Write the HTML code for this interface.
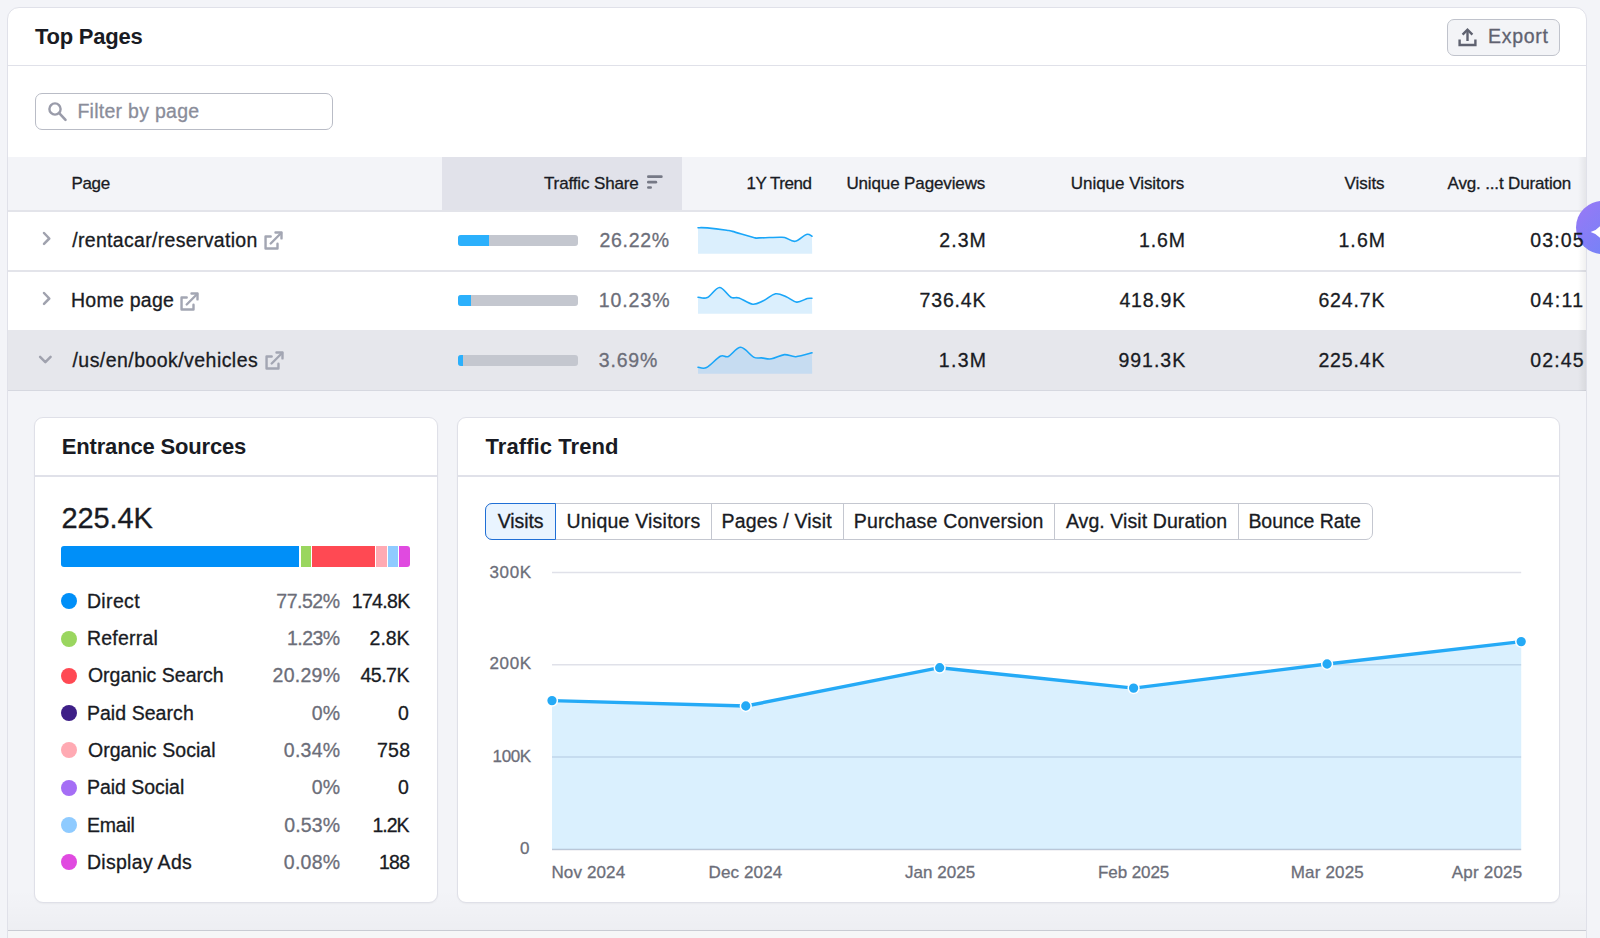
<!DOCTYPE html><html><head><meta charset="utf-8"><style>
*{box-sizing:border-box}
html,body{margin:0;padding:0}
body{width:1600px;height:938px;overflow:hidden;position:relative;background:#f3f4f8;font-family:"Liberation Sans",sans-serif;color:#191b23}
.a{position:absolute}
.tx{position:absolute;white-space:nowrap;font-family:"Liberation Sans",sans-serif}
</style></head><body>
<div class="a" style="left:7px;top:7px;width:1580px;height:1100px;background:#fff;border:1px solid #e0e1e9;border-radius:12px"></div>
<div class="a" style="left:8px;top:65px;width:1578px;height:1px;background:#e0e1e9"></div>
<div class="a" style="left:1447px;top:19px;width:113px;height:37px;background:#f3f4f7;border:1.3px solid #c0c3cc;border-radius:7px"></div>
<svg class="a" style="left:1457px;top:27px" width="21" height="21" viewBox="0 0 21 21"><path d="M10.5 3 L10.5 14" stroke="#5f6270" stroke-width="2.4" fill="none"/><path d="M5.6 7.6 L10.5 2.6 L15.4 7.6" stroke="#5f6270" stroke-width="2.4" fill="none" stroke-linejoin="miter"/><path d="M2.6 12.5 L2.6 18 L18.4 18 L18.4 12.5" stroke="#5f6270" stroke-width="2.4" fill="none"/></svg>
<div class="a" style="left:35px;top:93px;width:298px;height:37px;background:#fff;border:1px solid #b9bcc6;border-radius:7px"></div>
<svg class="a" style="left:46.5px;top:101px" width="21" height="21" viewBox="0 0 21 21"><circle cx="8" cy="8" r="5.6" stroke="#9a9caa" stroke-width="2.4" fill="none"/><path d="M12.2 12.2 L18.5 18.8" stroke="#9a9caa" stroke-width="2.6" stroke-linecap="round"/></svg>
<div class="a" style="left:8px;top:157px;width:1578px;height:53px;background:#f3f4f8"></div>
<div class="a" style="left:442px;top:157px;width:240px;height:53px;background:#e1e2ea"></div>
<div class="a" style="left:8px;top:210px;width:1578px;height:1.5px;background:#e3e4ea"></div>
<svg class="a" style="left:646px;top:175px" width="18" height="15" viewBox="0 0 18 15"><g stroke="#767986" stroke-width="2.6" stroke-linecap="round"><path d="M2.3 1.67 H15.4"/><path d="M2.3 7.13 H9.9"/><path d="M2.3 12.47 H4.7"/></g></svg>
<div class="a" style="left:8px;top:270px;width:1578px;height:1.5px;background:#e3e4ea"></div>
<div class="a" style="left:8px;top:330px;width:1578px;height:61px;background:#e6e7ec"></div>
<div class="a" style="left:8px;top:390px;width:1578px;height:1.5px;background:#d6d8e0"></div>
<svg class="a" style="left:41px;top:230.5px" width="11" height="15" viewBox="0 0 11 15"><path d="M3 2 L8.3 7.5 L3 12.9" stroke="#a0a2ae" stroke-width="2.5" fill="none" stroke-linecap="round" stroke-linejoin="round"/></svg>
<svg class="a" style="left:41px;top:290.5px" width="11" height="15" viewBox="0 0 11 15"><path d="M3 2 L8.3 7.5 L3 12.9" stroke="#a0a2ae" stroke-width="2.5" fill="none" stroke-linecap="round" stroke-linejoin="round"/></svg>
<svg class="a" style="left:37px;top:354px" width="16" height="11" viewBox="0 0 16 11"><path d="M3.1 2.9 L8.35 8.2 L13.6 2.9" stroke="#a0a2ae" stroke-width="2.5" fill="none" stroke-linecap="round" stroke-linejoin="round"/></svg>
<svg class="a" style="left:262px;top:230px" width="22" height="22" viewBox="0 0 22 22"><g stroke="#a3a6b3" stroke-width="2.4" fill="none" stroke-linecap="round" stroke-linejoin="round"><path d="M8.7 6.5 H3.55 V18.5 H15.5 V13.7"/><path d="M8.7 13.5 L19.2 3"/><path d="M13.5 2.5 H19.5 V8.4"/></g></svg>
<svg class="a" style="left:177.9px;top:290.5px" width="22" height="22" viewBox="0 0 22 22"><g stroke="#a3a6b3" stroke-width="2.4" fill="none" stroke-linecap="round" stroke-linejoin="round"><path d="M8.7 6.5 H3.55 V18.5 H15.5 V13.7"/><path d="M8.7 13.5 L19.2 3"/><path d="M13.5 2.5 H19.5 V8.4"/></g></svg>
<svg class="a" style="left:262.6px;top:350.2px" width="22" height="22" viewBox="0 0 22 22"><g stroke="#a3a6b3" stroke-width="2.4" fill="none" stroke-linecap="round" stroke-linejoin="round"><path d="M8.7 6.5 H3.55 V18.5 H15.5 V13.7"/><path d="M8.7 13.5 L19.2 3"/><path d="M13.5 2.5 H19.5 V8.4"/></g></svg>
<div class="a" style="left:458px;top:235.3px;width:120px;height:10.5px;background:#c4c7cf;border-radius:3px;overflow:hidden"><div style="width:31.3px;height:100%;background:#2bb0fc"></div></div>
<div class="a" style="left:458px;top:295.3px;width:120px;height:10.5px;background:#c4c7cf;border-radius:3px;overflow:hidden"><div style="width:12.5px;height:100%;background:#2bb0fc"></div></div>
<div class="a" style="left:458px;top:355.3px;width:120px;height:10.5px;background:#c4c7cf;border-radius:3px;overflow:hidden"><div style="width:4.6px;height:100%;background:#2bb0fc"></div></div>
<svg style="position:absolute;left:697.7px;top:226px;overflow:visible" width="114.2" height="27.69999999999999" viewBox="0 0 114.2 27.69999999999999"><path d="M0.0,1.7 C1.6,1.7 4.5,1.5 9.3,1.9 C14.1,2.3 24.6,3.6 28.8,4.2 C33.0,4.8 30.0,4.2 34.5,5.4 C39.0,6.6 51.1,10.4 55.6,11.5 C60.1,12.6 56.9,12.0 61.2,11.9 C65.5,11.9 77.2,11.2 81.6,11.2 C85.9,11.2 84.7,11.0 87.3,11.7 C89.9,12.4 93.6,15.8 97.1,15.3 C100.6,14.8 105.6,9.4 108.4,8.5 C111.2,7.6 113.1,9.9 114.0,10.2 L114.2,27.69999999999999 L0,27.69999999999999 Z" fill="#dbeffd"/><path d="M0.0,1.7 C1.6,1.7 4.5,1.5 9.3,1.9 C14.1,2.3 24.6,3.6 28.8,4.2 C33.0,4.8 30.0,4.2 34.5,5.4 C39.0,6.6 51.1,10.4 55.6,11.5 C60.1,12.6 56.9,12.0 61.2,11.9 C65.5,11.9 77.2,11.2 81.6,11.2 C85.9,11.2 84.7,11.0 87.3,11.7 C89.9,12.4 93.6,15.8 97.1,15.3 C100.6,14.8 105.6,9.4 108.4,8.5 C111.2,7.6 113.1,9.9 114.0,10.2" fill="none" stroke="#1aa6f8" stroke-width="1.6" stroke-linecap="round"/></svg>
<svg style="position:absolute;left:697.7px;top:286px;overflow:visible" width="114.2" height="27.69999999999999" viewBox="0 0 114.2 27.69999999999999"><path d="M0.0,11.2 C1.6,11.2 5.7,13.1 9.3,11.5 C12.9,9.9 17.6,1.6 21.5,1.5 C25.4,1.4 29.6,9.4 32.9,11.2 C36.1,12.9 37.4,10.8 41.0,12.0 C44.6,13.2 50.7,17.7 54.8,18.2 C58.9,18.6 61.6,16.4 65.4,14.7 C69.2,13.0 73.8,8.5 77.6,7.8 C81.4,7.1 84.7,9.3 88.2,10.7 C91.7,12.1 95.2,15.8 98.7,16.1 C102.2,16.4 106.8,13.1 109.3,12.5 C111.8,11.9 113.2,12.3 114.0,12.3 L114.2,27.69999999999999 L0,27.69999999999999 Z" fill="#dbeffd"/><path d="M0.0,11.2 C1.6,11.2 5.7,13.1 9.3,11.5 C12.9,9.9 17.6,1.6 21.5,1.5 C25.4,1.4 29.6,9.4 32.9,11.2 C36.1,12.9 37.4,10.8 41.0,12.0 C44.6,13.2 50.7,17.7 54.8,18.2 C58.9,18.6 61.6,16.4 65.4,14.7 C69.2,13.0 73.8,8.5 77.6,7.8 C81.4,7.1 84.7,9.3 88.2,10.7 C91.7,12.1 95.2,15.8 98.7,16.1 C102.2,16.4 106.8,13.1 109.3,12.5 C111.8,11.9 113.2,12.3 114.0,12.3" fill="none" stroke="#1aa6f8" stroke-width="1.6" stroke-linecap="round"/></svg>
<svg style="position:absolute;left:697.7px;top:346px;overflow:visible" width="114.2" height="27.69999999999999" viewBox="0 0 114.2 27.69999999999999"><path d="M0.0,21.2 C1.4,21.3 4.8,23.4 8.5,21.6 C12.2,19.8 18.7,12.1 22.3,10.2 C25.9,8.3 27.0,11.9 30.4,10.4 C33.8,8.9 38.5,1.2 42.7,1.3 C46.9,1.4 52.1,9.3 55.6,11.1 C59.1,12.9 60.8,11.6 63.8,11.9 C66.8,12.2 69.7,13.4 73.5,12.8 C77.3,12.3 82.4,9.0 86.5,8.6 C90.6,8.3 93.3,11.0 97.9,10.7 C102.5,10.4 111.3,7.5 114.0,6.8 L114.2,27.69999999999999 L0,27.69999999999999 Z" fill="#c6dcf1"/><path d="M0.0,21.2 C1.4,21.3 4.8,23.4 8.5,21.6 C12.2,19.8 18.7,12.1 22.3,10.2 C25.9,8.3 27.0,11.9 30.4,10.4 C33.8,8.9 38.5,1.2 42.7,1.3 C46.9,1.4 52.1,9.3 55.6,11.1 C59.1,12.9 60.8,11.6 63.8,11.9 C66.8,12.2 69.7,13.4 73.5,12.8 C77.3,12.3 82.4,9.0 86.5,8.6 C90.6,8.3 93.3,11.0 97.9,10.7 C102.5,10.4 111.3,7.5 114.0,6.8" fill="none" stroke="#1aa6f8" stroke-width="1.6" stroke-linecap="round"/></svg>
<div class="a" style="left:1578px;top:157px;width:8px;height:234px;background:linear-gradient(to right, rgba(0,0,0,0), rgba(0,0,0,0.06))"></div>
<div class="a" style="left:8px;top:391px;width:1578px;height:539px;background:#f3f4f8"></div>
<div class="a" style="left:8px;top:890px;width:1578px;height:40px;background:linear-gradient(to bottom, rgba(0,0,0,0), rgba(0,0,0,0.025))"></div>
<div class="a" style="left:8px;top:929.5px;width:1578px;height:1.5px;background:#c9cbd3"></div>
<div class="a" style="left:8px;top:931px;width:1578px;height:10px;background:#f6f6f7"></div>
<div class="a" style="left:34px;top:416.5px;width:404px;height:486px;background:#fff;border:1px solid #dfe0e8;border-radius:9px;box-shadow:0 1px 2px rgba(0,0,0,0.04)"></div>
<div class="a" style="left:35px;top:475px;width:402px;height:1.5px;background:#e0e1e9"></div>
<div class="a" style="left:61.1px;top:545.5px;width:238.2px;height:21.2px;background:#008ff8;border-radius:3px 0 0 3px"></div>
<div class="a" style="left:301px;top:545.5px;width:9.9px;height:21.2px;background:#9ad65f;border-radius:0"></div>
<div class="a" style="left:312.1px;top:545.5px;width:62.6px;height:21.2px;background:#ff4953;border-radius:0"></div>
<div class="a" style="left:376.1px;top:545.5px;width:10.6px;height:21.2px;background:#ffaab3;border-radius:0"></div>
<div class="a" style="left:388px;top:545.5px;width:10.0px;height:21.2px;background:#8fcbff;border-radius:0"></div>
<div class="a" style="left:399.3px;top:545.5px;width:10.5px;height:21.2px;background:#e04ae0;border-radius:0 3px 3px 0"></div>
<div class="a" style="left:61.1px;top:593.2px;width:16px;height:16px;border-radius:50%;background:#008ff8"></div>
<div class="a" style="left:61.1px;top:630.5px;width:16px;height:16px;border-radius:50%;background:#9ad65f"></div>
<div class="a" style="left:61.1px;top:667.8px;width:16px;height:16px;border-radius:50%;background:#ff4953"></div>
<div class="a" style="left:61.1px;top:705.1px;width:16px;height:16px;border-radius:50%;background:#3e1f87"></div>
<div class="a" style="left:61.1px;top:742.4px;width:16px;height:16px;border-radius:50%;background:#ffaab3"></div>
<div class="a" style="left:61.1px;top:779.7px;width:16px;height:16px;border-radius:50%;background:#a56ef5"></div>
<div class="a" style="left:61.1px;top:817.0px;width:16px;height:16px;border-radius:50%;background:#8fcbff"></div>
<div class="a" style="left:61.1px;top:854.3px;width:16px;height:16px;border-radius:50%;background:#e04ae0"></div>
<div class="a" style="left:456.8px;top:416.5px;width:1103.7px;height:486px;background:#fff;border:1px solid #dfe0e8;border-radius:9px;box-shadow:0 1px 2px rgba(0,0,0,0.04)"></div>
<div class="a" style="left:457.8px;top:475px;width:1101.7px;height:1.5px;background:#e0e1e9"></div>
<div class="a" style="left:485px;top:503px;width:888px;height:37px;border:1.5px solid #c4c7d0;border-radius:7px;background:#fff"></div>
<div class="a" style="left:710.5px;top:503px;width:1.5px;height:37px;background:#c4c7d0"></div>
<div class="a" style="left:842.85px;top:503px;width:1.5px;height:37px;background:#c4c7d0"></div>
<div class="a" style="left:1053.75px;top:503px;width:1.5px;height:37px;background:#c4c7d0"></div>
<div class="a" style="left:1237.75px;top:503px;width:1.5px;height:37px;background:#c4c7d0"></div>
<div class="a" style="left:484.7px;top:503px;width:71px;height:37px;border:1.8px solid #1f6fd6;border-radius:7px 0 0 7px;background:#e9f4ff"></div>
<svg class="a" style="left:552px;top:560px;overflow:visible" width="969.2" height="291" viewBox="0 0 969.2 291"><line x1="0" y1="12.6" x2="969.2" y2="12.6" stroke="#e0e1e9" stroke-width="1.5"/><line x1="0" y1="104.8" x2="969.2" y2="104.8" stroke="#e0e1e9" stroke-width="1.5"/><line x1="0" y1="197.0" x2="969.2" y2="197.0" stroke="#e0e1e9" stroke-width="1.5"/><line x1="0" y1="289.4" x2="969.2" y2="289.4" stroke="#c9cbd6" stroke-width="1.5"/>
<path d="M0,289.4 L0.0,140.6 L193.8,146.0 L387.7,107.7 L581.6,128.1 L775.1,104.0 L969.2,81.6 L969.2,289.4 Z" fill="rgba(30,162,250,0.165)"/>
<polyline points="0.0,140.6 193.8,146.0 387.7,107.7 581.6,128.1 775.1,104.0 969.2,81.6" fill="none" stroke="#25aaf6" stroke-width="3.4" stroke-linejoin="round" stroke-linecap="round"/>
<circle cx="0.0" cy="140.6" r="5.4" fill="#25aaf6" stroke="#fff" stroke-width="1.5"/><circle cx="193.8" cy="146.0" r="5.4" fill="#25aaf6" stroke="#fff" stroke-width="1.5"/><circle cx="387.7" cy="107.7" r="5.4" fill="#25aaf6" stroke="#fff" stroke-width="1.5"/><circle cx="581.6" cy="128.1" r="5.4" fill="#25aaf6" stroke="#fff" stroke-width="1.5"/><circle cx="775.1" cy="104.0" r="5.4" fill="#25aaf6" stroke="#fff" stroke-width="1.5"/><circle cx="969.2" cy="81.6" r="5.4" fill="#25aaf6" stroke="#fff" stroke-width="1.5"/></svg>
<div class="a" style="left:1576px;top:201px;width:53px;height:53px;border-radius:50%;background:linear-gradient(135deg,#9a78f6,#6a86f7)"></div>
<svg class="a" style="left:1585px;top:218px" width="15" height="28" viewBox="0 0 15 28"><path d="M19,0.5999999999999996 Q21.95,11.05 32.4,14 Q21.95,16.95 19,27.4 Q16.05,16.95 5.6,14 Q16.05,11.05 19,0.5999999999999996 Z" fill="#fff"/></svg>
<div class="tx" style="left:35px;top:25.9px;font-size:22px;line-height:22px;font-weight:700;color:#191b23;letter-spacing:-0.25px">Top Pages</div>
<div class="tx" style="left:1488px;top:27.03px;font-size:19.5px;line-height:19.5px;font-weight:400;color:#5f6270;letter-spacing:0.7px;-webkit-text-stroke:0.3px #5f6270">Export</div>
<div class="tx" style="left:77.4px;top:102.02px;font-size:19.5px;line-height:19.5px;font-weight:400;color:#8a8d9a;letter-spacing:0.277px;-webkit-text-stroke:0.3px #8a8d9a">Filter by page</div>
<div class="tx" style="left:71.5px;top:174.9px;font-size:17px;line-height:17px;font-weight:400;color:#191b23;letter-spacing:-0.367px;-webkit-text-stroke:0.3px #191b23">Page</div>
<div class="tx" style="left:544px;top:174.9px;font-size:17px;line-height:17px;font-weight:400;color:#191b23;letter-spacing:-0.133px;-webkit-text-stroke:0.3px #191b23">Traffic Share</div>
<div class="tx" style="left:746.5px;top:174.9px;font-size:17px;line-height:17px;font-weight:400;color:#191b23;letter-spacing:-0.457px;-webkit-text-stroke:0.3px #191b23">1Y Trend</div>
<div class="tx" style="left:846.4px;top:174.9px;font-size:17px;line-height:17px;font-weight:400;color:#191b23;letter-spacing:-0.127px;-webkit-text-stroke:0.3px #191b23">Unique Pageviews</div>
<div class="tx" style="left:1070.8px;top:174.9px;font-size:17px;line-height:17px;font-weight:400;color:#191b23;letter-spacing:-0.036px;-webkit-text-stroke:0.3px #191b23">Unique Visitors</div>
<div class="tx" style="left:1344.5px;top:174.9px;font-size:17px;line-height:17px;font-weight:400;color:#191b23;letter-spacing:-0.05px;-webkit-text-stroke:0.3px #191b23">Visits</div>
<div class="tx" style="left:1447.5px;top:174.9px;font-size:17px;line-height:17px;font-weight:400;color:#191b23;letter-spacing:-0.147px;-webkit-text-stroke:0.3px #191b23">Avg. ...t Duration</div>
<div class="tx" style="left:72.2px;top:230.72px;font-size:19.5px;line-height:19.5px;font-weight:400;color:#191b23;letter-spacing:0.315px;-webkit-text-stroke:0.3px #191b23">/rentacar/reservation</div>
<div class="tx" style="left:599.4px;top:230.72px;font-size:19.5px;line-height:19.5px;font-weight:400;color:#6c6e79;letter-spacing:0.72px;-webkit-text-stroke:0.3px #6c6e79">26.22%</div>
<div class="tx" style="left:939.3px;top:230.72px;font-size:19.5px;line-height:19.5px;font-weight:400;color:#191b23;letter-spacing:1.033px;-webkit-text-stroke:0.3px #191b23">2.3M</div>
<div class="tx" style="left:1139px;top:230.72px;font-size:19.5px;line-height:19.5px;font-weight:400;color:#191b23;letter-spacing:0.917px;-webkit-text-stroke:0.3px #191b23">1.6M</div>
<div class="tx" style="left:1338.4px;top:230.72px;font-size:19.5px;line-height:19.5px;font-weight:400;color:#191b23;letter-spacing:1.117px;-webkit-text-stroke:0.3px #191b23">1.6M</div>
<div class="tx" style="left:1530.25px;top:230.72px;font-size:19.5px;line-height:19.5px;font-weight:400;color:#191b23;letter-spacing:1.137px;-webkit-text-stroke:0.3px #191b23">03:05</div>
<div class="tx" style="left:71px;top:290.73px;font-size:19.5px;line-height:19.5px;font-weight:400;color:#191b23;letter-spacing:0.262px;-webkit-text-stroke:0.3px #191b23">Home page</div>
<div class="tx" style="left:598.7px;top:290.73px;font-size:19.5px;line-height:19.5px;font-weight:400;color:#6c6e79;letter-spacing:0.94px;-webkit-text-stroke:0.3px #6c6e79">10.23%</div>
<div class="tx" style="left:919.6px;top:290.73px;font-size:19.5px;line-height:19.5px;font-weight:400;color:#191b23;letter-spacing:0.82px;-webkit-text-stroke:0.3px #191b23">736.4K</div>
<div class="tx" style="left:1119.4px;top:290.73px;font-size:19.5px;line-height:19.5px;font-weight:400;color:#191b23;letter-spacing:0.8px;-webkit-text-stroke:0.3px #191b23">418.9K</div>
<div class="tx" style="left:1318.4px;top:290.73px;font-size:19.5px;line-height:19.5px;font-weight:400;color:#191b23;letter-spacing:0.87px;-webkit-text-stroke:0.3px #191b23">624.7K</div>
<div class="tx" style="left:1530.25px;top:290.73px;font-size:19.5px;line-height:19.5px;font-weight:400;color:#191b23;letter-spacing:1.387px;-webkit-text-stroke:0.3px #191b23">04:11</div>
<div class="tx" style="left:72.5px;top:350.93px;font-size:19.5px;line-height:19.5px;font-weight:400;color:#191b23;letter-spacing:0.447px;-webkit-text-stroke:0.3px #191b23">/us/en/book/vehicles</div>
<div class="tx" style="left:598.7px;top:350.93px;font-size:19.5px;line-height:19.5px;font-weight:400;color:#6c6e79;letter-spacing:0.85px;-webkit-text-stroke:0.3px #6c6e79">3.69%</div>
<div class="tx" style="left:938.8px;top:350.93px;font-size:19.5px;line-height:19.5px;font-weight:400;color:#191b23;letter-spacing:1.3px;-webkit-text-stroke:0.3px #191b23">1.3M</div>
<div class="tx" style="left:1118.4px;top:350.93px;font-size:19.5px;line-height:19.5px;font-weight:400;color:#191b23;letter-spacing:1.0px;-webkit-text-stroke:0.3px #191b23">991.3K</div>
<div class="tx" style="left:1318.4px;top:350.93px;font-size:19.5px;line-height:19.5px;font-weight:400;color:#191b23;letter-spacing:0.87px;-webkit-text-stroke:0.3px #191b23">225.4K</div>
<div class="tx" style="left:1530.25px;top:350.93px;font-size:19.5px;line-height:19.5px;font-weight:400;color:#191b23;letter-spacing:1.137px;-webkit-text-stroke:0.3px #191b23">02:45</div>
<div class="tx" style="left:61.75px;top:435.9px;font-size:22px;line-height:22px;font-weight:700;color:#191b23;letter-spacing:-0.167px">Entrance Sources</div>
<div class="tx" style="left:61.5px;top:504.45px;font-size:29px;line-height:29px;font-weight:400;color:#191b23;letter-spacing:-0.12px;-webkit-text-stroke:0.3px #191b23">225.4K</div>
<div class="tx" style="left:86.9px;top:591.82px;font-size:19.5px;line-height:19.5px;font-weight:400;color:#191b23;letter-spacing:0.36px;-webkit-text-stroke:0.3px #191b23">Direct</div>
<div class="tx" style="left:276.3px;top:591.82px;font-size:19.5px;line-height:19.5px;font-weight:400;color:#6c6e79;letter-spacing:-0.48px;-webkit-text-stroke:0.3px #6c6e79">77.52%</div>
<div class="tx" style="left:351.7px;top:591.82px;font-size:19.5px;line-height:19.5px;font-weight:400;color:#191b23;letter-spacing:-0.64px;-webkit-text-stroke:0.3px #191b23">174.8K</div>
<div class="tx" style="left:86.9px;top:629.12px;font-size:19.5px;line-height:19.5px;font-weight:400;color:#191b23;letter-spacing:0.229px;-webkit-text-stroke:0.3px #191b23">Referral</div>
<div class="tx" style="left:287px;top:629.12px;font-size:19.5px;line-height:19.5px;font-weight:400;color:#6c6e79;letter-spacing:-0.525px;-webkit-text-stroke:0.3px #6c6e79">1.23%</div>
<div class="tx" style="left:369.6px;top:629.12px;font-size:19.5px;line-height:19.5px;font-weight:400;color:#191b23;letter-spacing:-0.033px;-webkit-text-stroke:0.3px #191b23">2.8K</div>
<div class="tx" style="left:87.9px;top:666.42px;font-size:19.5px;line-height:19.5px;font-weight:400;color:#191b23;letter-spacing:0.023px;-webkit-text-stroke:0.3px #191b23">Organic Search</div>
<div class="tx" style="left:272.6px;top:666.42px;font-size:19.5px;line-height:19.5px;font-weight:400;color:#6c6e79;letter-spacing:0.26px;-webkit-text-stroke:0.3px #6c6e79">20.29%</div>
<div class="tx" style="left:360.4px;top:666.42px;font-size:19.5px;line-height:19.5px;font-weight:400;color:#191b23;letter-spacing:-0.475px;-webkit-text-stroke:0.3px #191b23">45.7K</div>
<div class="tx" style="left:86.9px;top:703.72px;font-size:19.5px;line-height:19.5px;font-weight:400;color:#191b23;letter-spacing:0.06px;-webkit-text-stroke:0.3px #191b23">Paid Search</div>
<div class="tx" style="left:311.7px;top:703.72px;font-size:19.5px;line-height:19.5px;font-weight:400;color:#6c6e79;letter-spacing:0.2px;-webkit-text-stroke:0.3px #6c6e79">0%</div>
<div class="tx" style="left:398px;top:703.72px;font-size:19.5px;line-height:19.5px;font-weight:400;color:#191b23;letter-spacing:1.5px;-webkit-text-stroke:0.3px #191b23">0</div>
<div class="tx" style="left:87.9px;top:741.02px;font-size:19.5px;line-height:19.5px;font-weight:400;color:#191b23;letter-spacing:0.069px;-webkit-text-stroke:0.3px #191b23">Organic Social</div>
<div class="tx" style="left:283.8px;top:741.02px;font-size:19.5px;line-height:19.5px;font-weight:400;color:#6c6e79;letter-spacing:0.275px;-webkit-text-stroke:0.3px #6c6e79">0.34%</div>
<div class="tx" style="left:377px;top:741.02px;font-size:19.5px;line-height:19.5px;font-weight:400;color:#191b23;letter-spacing:0.25px;-webkit-text-stroke:0.3px #191b23">758</div>
<div class="tx" style="left:86.9px;top:778.32px;font-size:19.5px;line-height:19.5px;font-weight:400;color:#191b23;letter-spacing:-0.02px;-webkit-text-stroke:0.3px #191b23">Paid Social</div>
<div class="tx" style="left:311.7px;top:778.32px;font-size:19.5px;line-height:19.5px;font-weight:400;color:#6c6e79;letter-spacing:0.2px;-webkit-text-stroke:0.3px #6c6e79">0%</div>
<div class="tx" style="left:398px;top:778.32px;font-size:19.5px;line-height:19.5px;font-weight:400;color:#191b23;letter-spacing:1.5px;-webkit-text-stroke:0.3px #191b23">0</div>
<div class="tx" style="left:86.9px;top:815.62px;font-size:19.5px;line-height:19.5px;font-weight:400;color:#191b23;letter-spacing:-0.2px;-webkit-text-stroke:0.3px #191b23">Email</div>
<div class="tx" style="left:284.3px;top:815.62px;font-size:19.5px;line-height:19.5px;font-weight:400;color:#6c6e79;letter-spacing:0.15px;-webkit-text-stroke:0.3px #6c6e79">0.53%</div>
<div class="tx" style="left:372.5px;top:815.62px;font-size:19.5px;line-height:19.5px;font-weight:400;color:#191b23;letter-spacing:-1.0px;-webkit-text-stroke:0.3px #191b23">1.2K</div>
<div class="tx" style="left:86.9px;top:852.92px;font-size:19.5px;line-height:19.5px;font-weight:400;color:#191b23;letter-spacing:0.3px;-webkit-text-stroke:0.3px #191b23">Display Ads</div>
<div class="tx" style="left:283.8px;top:852.92px;font-size:19.5px;line-height:19.5px;font-weight:400;color:#6c6e79;letter-spacing:0.275px;-webkit-text-stroke:0.3px #6c6e79">0.08%</div>
<div class="tx" style="left:378.9px;top:852.92px;font-size:19.5px;line-height:19.5px;font-weight:400;color:#191b23;letter-spacing:-0.7px;-webkit-text-stroke:0.3px #191b23">188</div>
<div class="tx" style="left:485.5px;top:435.9px;font-size:22px;line-height:22px;font-weight:700;color:#191b23;letter-spacing:0.083px">Traffic Trend</div>
<div class="tx" style="left:497.7px;top:511.82px;font-size:19.5px;line-height:19.5px;font-weight:400;color:#191b23;letter-spacing:-0.08px;-webkit-text-stroke:0.3px #191b23">Visits</div>
<div class="tx" style="left:566.5px;top:511.82px;font-size:19.5px;line-height:19.5px;font-weight:400;color:#191b23;letter-spacing:0.214px;-webkit-text-stroke:0.3px #191b23">Unique Visitors</div>
<div class="tx" style="left:721.6px;top:511.82px;font-size:19.5px;line-height:19.5px;font-weight:400;color:#191b23;letter-spacing:0.167px;-webkit-text-stroke:0.3px #191b23">Pages / Visit</div>
<div class="tx" style="left:853.7px;top:511.82px;font-size:19.5px;line-height:19.5px;font-weight:400;color:#191b23;letter-spacing:0.183px;-webkit-text-stroke:0.3px #191b23">Purchase Conversion</div>
<div class="tx" style="left:1065.9px;top:511.82px;font-size:19.5px;line-height:19.5px;font-weight:400;color:#191b23;letter-spacing:0.078px;-webkit-text-stroke:0.3px #191b23">Avg. Visit Duration</div>
<div class="tx" style="left:1248.4px;top:511.82px;font-size:19.5px;line-height:19.5px;font-weight:400;color:#191b23;letter-spacing:-0.04px;-webkit-text-stroke:0.3px #191b23">Bounce Rate</div>
<div class="tx" style="left:489.5px;top:563.65px;font-size:17px;line-height:17px;font-weight:400;color:#6c6e79;letter-spacing:0.667px;-webkit-text-stroke:0.3px #6c6e79">300K</div>
<div class="tx" style="left:489.5px;top:655.45px;font-size:17px;line-height:17px;font-weight:400;color:#6c6e79;letter-spacing:0.667px;-webkit-text-stroke:0.3px #6c6e79">200K</div>
<div class="tx" style="left:492.6px;top:748.15px;font-size:17px;line-height:17px;font-weight:400;color:#6c6e79;letter-spacing:-0.367px;-webkit-text-stroke:0.3px #6c6e79">100K</div>
<div class="tx" style="left:520px;top:840.15px;font-size:17px;line-height:17px;font-weight:400;color:#6c6e79;letter-spacing:1.5px;-webkit-text-stroke:0.3px #6c6e79">0</div>
<div class="tx" style="left:551.4px;top:863.95px;font-size:17px;line-height:17px;font-weight:400;color:#6c6e79;letter-spacing:0.143px;-webkit-text-stroke:0.3px #6c6e79">Nov 2024</div>
<div class="tx" style="left:708.6px;top:863.95px;font-size:17px;line-height:17px;font-weight:400;color:#6c6e79;letter-spacing:0.114px;-webkit-text-stroke:0.3px #6c6e79">Dec 2024</div>
<div class="tx" style="left:904.9px;top:863.95px;font-size:17px;line-height:17px;font-weight:400;color:#6c6e79;letter-spacing:0.057px;-webkit-text-stroke:0.3px #6c6e79">Jan 2025</div>
<div class="tx" style="left:1098px;top:863.95px;font-size:17px;line-height:17px;font-weight:400;color:#6c6e79;letter-spacing:-0.086px;-webkit-text-stroke:0.3px #6c6e79">Feb 2025</div>
<div class="tx" style="left:1290.7px;top:863.95px;font-size:17px;line-height:17px;font-weight:400;color:#6c6e79;letter-spacing:0.186px;-webkit-text-stroke:0.3px #6c6e79">Mar 2025</div>
<div class="tx" style="left:1451.8px;top:863.95px;font-size:17px;line-height:17px;font-weight:400;color:#6c6e79;letter-spacing:0.2px;-webkit-text-stroke:0.3px #6c6e79">Apr 2025</div>
</body></html>
